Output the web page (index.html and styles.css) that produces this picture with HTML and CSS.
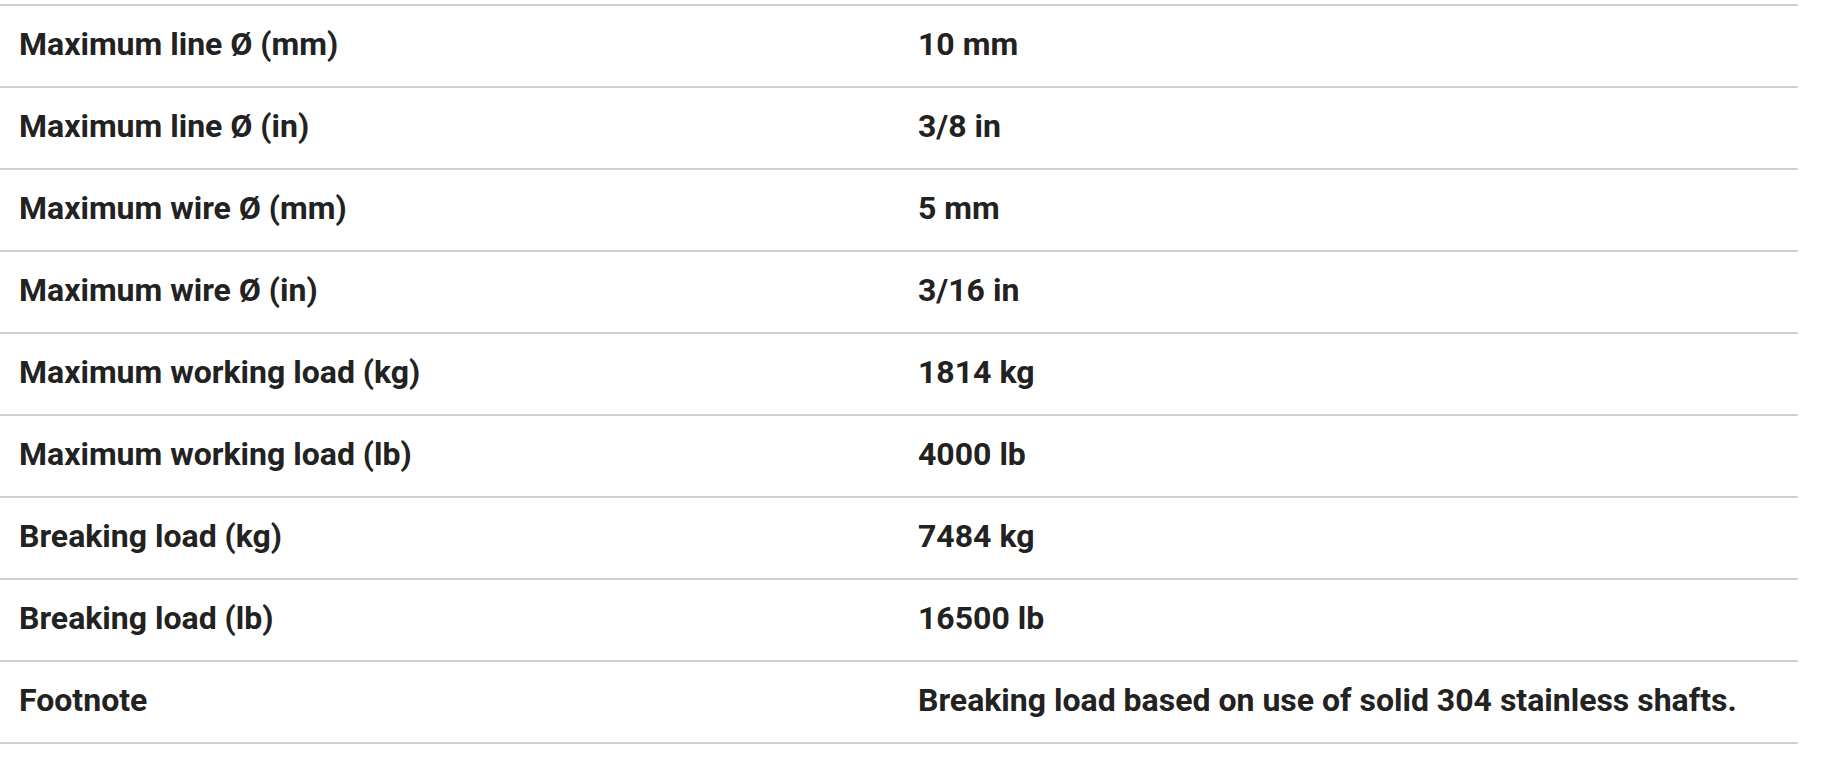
FILE: index.html
```html
<!DOCTYPE html>
<html>
<head>
<meta charset="utf-8">
<link rel="stylesheet" href="styles.css">
</head>
<body>
<table class="specs">
  <tbody>
    <tr><td class="label">Maximum line Ø (mm)</td><td class="value">10 mm</td></tr>
    <tr><td class="label">Maximum line Ø (in)</td><td class="value">3/8 in</td></tr>
    <tr><td class="label">Maximum wire Ø (mm)</td><td class="value">5 mm</td></tr>
    <tr><td class="label">Maximum wire Ø (in)</td><td class="value">3/16 in</td></tr>
    <tr><td class="label">Maximum working load (kg)</td><td class="value">1814 kg</td></tr>
    <tr><td class="label">Maximum working load (lb)</td><td class="value">4000 lb</td></tr>
    <tr><td class="label">Breaking load (kg)</td><td class="value">7484 kg</td></tr>
    <tr><td class="label">Breaking load (lb)</td><td class="value">16500 lb</td></tr>
    <tr><td class="label">Footnote</td><td class="value">Breaking load based on use of solid 304 stainless shafts.</td></tr>
  </tbody>
</table>
</body>
</html>
```
FILE: styles.css
```css
html, body {
  margin: 0;
  padding: 0;
  background: #fff;
}
body {
  padding-top: 4px;
  font-family: Roboto, "Liberation Sans", Arial, sans-serif;
  color: #222;
}
.specs {
  width: 1798px;
  border-collapse: collapse;
  table-layout: fixed;
}
.specs tr {
  border-top: 2px solid #cfcfcf;
  border-bottom: 2px solid #cfcfcf;
}
.specs td {
  height: 82px;
  padding: 0 19px 4px;
  font-size: 32px;
  font-weight: 700;
  vertical-align: middle;
  box-sizing: border-box;
  line-height: 1.2;
}
.specs td.label {
  width: 899px;
}
```
